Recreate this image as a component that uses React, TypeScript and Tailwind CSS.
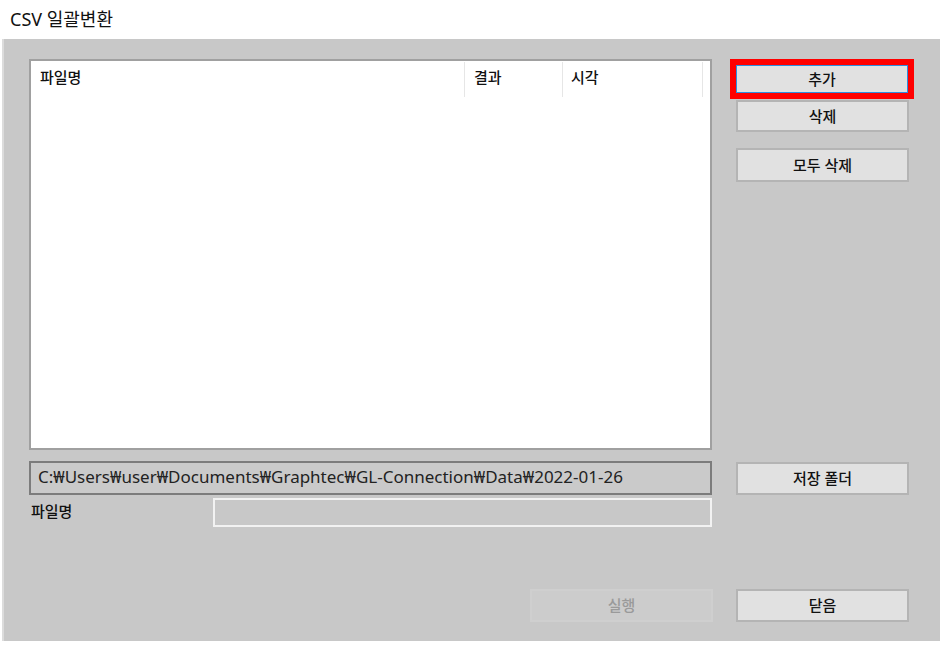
import React from 'react';

const font = { fontFamily: '"Noto Sans", "Noto Sans CJK KR", sans-serif' };

// 일반 버튼
function Btn({ label, className = '', disabled = false }: { label: string; className?: string; disabled?: boolean }) {
  return (
    <div
      className={`flex items-center justify-center border-2 text-[15px] font-medium ${
        disabled ? 'border-[#cfcfcf] bg-[#cccccc] text-[#9a9a9a]' : 'border-[#b4b4b4] bg-[#e1e1e1] text-[#111]'
      } ${className}`}
    >
      {label}
    </div>
  );
}

export default function App() {
  const path = 'C:₩Users₩user₩Documents₩Graphtec₩GL-Connection₩Data₩2022-01-26';

  return (
    <div className="w-[940px] h-[646px] bg-white overflow-hidden" style={font}>
      {/* 제목 */}
      <div className="h-[39px] pl-[10px] flex items-center text-[18px] text-[#111]">CSV 일괄변환</div>

      {/* 본문 패널 */}
      <div className="ml-[2px] h-[602px] bg-[#c8c8c8] border-l-2 border-[#dcdcdc] pt-[20px] pl-[25px] flex flex-col">
        <div className="flex">
          {/* 파일 목록 */}
          <div className="w-[683px] h-[391px] bg-white border-2 border-[#a0a0a0]">
            <div className="flex h-[35px] mt-[1px] text-[15px] font-medium text-[#111]">
              <div className="w-[434px] pl-[9px] pt-[4px] border-r border-[#e6e6e6]">파일명</div>
              <div className="w-[98px] pl-[9px] pt-[4px] border-r border-[#e6e6e6]">결과</div>
              <div className="w-[140px] pl-[8px] pt-[4px] border-r border-[#e6e6e6]">시각</div>
            </div>
          </div>

          {/* 오른쪽 버튼 */}
          <div className="ml-[18px] flex flex-col">
            <div className="w-[184px] h-[40px] border-[6px] border-[#ff0000]">
              <div className="h-full flex items-center justify-center border border-[#2d8fe0] bg-[#e1e1e1] text-[15px] font-medium text-[#111]">
                추가
              </div>
            </div>
            <Btn label="삭제" className="ml-[6px] mt-[1px] w-[173px] h-[32px]" />
            <Btn label="모두 삭제" className="ml-[6px] mt-[16px] w-[173px] h-[34px]" />
          </div>
        </div>

        {/* 저장 경로 */}
        <div className="flex mt-[11px]">
          <div className="w-[683px] h-[34px] border-2 border-[#7c7c7c] bg-[#cacaca] pl-[7px] pb-[3px] flex items-center text-[17px] text-[#222] whitespace-nowrap">
            {path}
          </div>
          <Btn label="저장 폴더" className="ml-[24px] mt-[1px] w-[173px] h-[33px]" />
        </div>

        {/* 파일명 */}
        <div className="flex mt-[3px]">
          <div className="w-[184px] pl-[2px] pt-[2px] text-[15px] font-medium text-[#111]">파일명</div>
          <div className="w-[499px] h-[29px] border-2 border-[#f2f2f2] bg-[#c8c8c8]"></div>
        </div>

        {/* 하단 버튼 */}
        <div className="flex mt-[62px]">
          <Btn label="실행" disabled className="ml-[501px] w-[183px] h-[33px]" />
          <Btn label="닫음" className="ml-[23px] w-[173px] h-[33px]" />
        </div>
      </div>
    </div>
  );
}
